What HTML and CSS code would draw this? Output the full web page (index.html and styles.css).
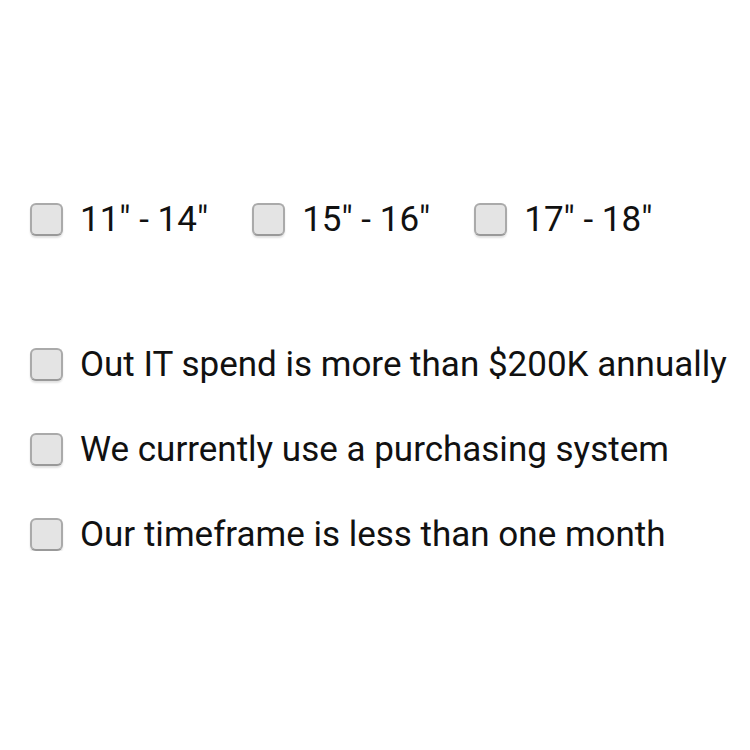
FILE: index.html
```html
<!DOCTYPE html>
<html lang="en">
<head>
    <meta charset="UTF-8">
    <meta name="viewport" content="width=device-width, initial-scale=1.0">
    <title>Requirements</title>
    <link rel="stylesheet" href="styles.css">
</head>
<body>
    <div class="size-row">
        <label class="option"><input type="checkbox" class="box"> 11" - 14"</label>
        <label class="option"><input type="checkbox" class="box"> 15" - 16"</label>
        <label class="option"><input type="checkbox" class="box"> 17" - 18"</label>
    </div>

    <div class="facts">
        <label class="option"><input type="checkbox" class="box"> Out IT spend is more than $200K annually</label>
        <label class="option"><input type="checkbox" class="box"> We currently use a purchasing system</label>
        <label class="option"><input type="checkbox" class="box"> Our timeframe is less than one month</label>
    </div>
</body>
</html>
```

FILE: styles.css
```css
body {
    font-family: 'Roboto', 'Liberation Sans', sans-serif;
    color: #111;
    background-color: #fff;
    margin: 0;
    padding: 202px 0 0 30px;
}
.option {
    display: flex;
    align-items: center;
    gap: 17px;
    font-size: 35px;
    height: 34px;
    white-space: nowrap;
}
.box {
    appearance: none;
    -webkit-appearance: none;
    width: 33px;
    height: 33px;
    margin: 0;
    flex-shrink: 0;
    border: 2px solid #aaa;
    border-bottom-color: #999;
    border-radius: 6px;
    background-color: #e4e4e4;
    box-shadow: 0 2px 2px rgba(0, 0, 0, 0.12);
}
.size-row {
    display: flex;
    gap: 44px;
}
.facts {
    display: flex;
    flex-direction: column;
    gap: 51px;
    margin-top: 111px;
}
```
